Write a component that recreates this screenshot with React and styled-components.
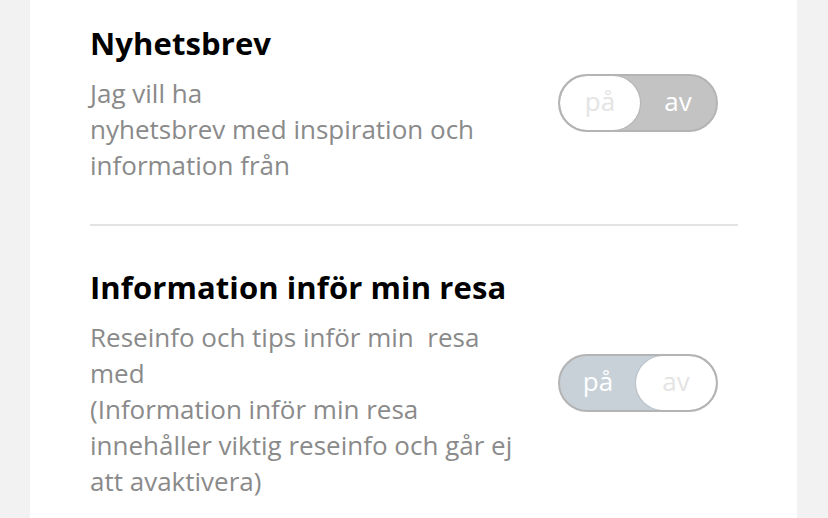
import React from "react";
import styled, { createGlobalStyle } from "styled-components";

const GlobalStyle = createGlobalStyle`
  html, body { margin: 0; padding: 0; background: #f2f2f2; }
  body { font-family: "Open Sans", "Noto Sans", sans-serif; }
`;

const Page = styled.div`
  display: flex;
  min-height: 518px;
  padding-left: 30px;
  width: 828px;
  box-sizing: border-box;
`;

const Card = styled.main`
  width: 767px;
  background: #ffffff;
  padding: 0 59px 0 60px;
  box-sizing: border-box;
  min-height: 518px;
`;

const Section = styled.section`
  display: flex;
  align-items: center;
  justify-content: space-between;
  padding: ${(p) => p.$pad};
  border-bottom: ${(p) => (p.$divider ? "2px solid #e3e3e3" : "none")};
`;

const TextBlock = styled.div`
  display: flex;
  flex-direction: column;
  gap: 12px;
`;

const Title = styled.h2`
  margin: 0;
  font-size: 31px;
  line-height: 40px;
  font-weight: 700;
  color: #000;
  letter-spacing: 0.1px;
  white-space: nowrap;
`;

const Desc = styled.p`
  margin: 0;
  font-size: 26px;
  line-height: 36px;
  font-weight: 400;
  color: #8a8a8a;
  white-space: pre;
`;

const Track = styled.div`
  display: flex;
  width: 160px;
  height: 58px;
  margin-right: 20px;
  box-sizing: border-box;
  border: 2px solid #b4b4b4;
  border-radius: 29px;
  background: ${(p) => p.$color};
  overflow: hidden;
  flex-shrink: 0;
`;

const Segment = styled.div`
  flex: ${(p) => (p.$knob ? "0 0 80px" : "1")};
  display: flex;
  align-items: center;
  justify-content: center;
  border-radius: 27px;
  background: ${(p) => (p.$knob ? "#ffffff" : "transparent")};
  box-shadow: ${(p) => (p.$knob ? "0 0 1px 1px rgba(0,0,0,0.08)" : "none")};
  color: ${(p) => (p.$knob ? "#e4e4e4" : "#ffffff")};
  font-size: 26px;
  line-height: 1;
  padding-bottom: 4px;
  box-sizing: border-box;
`;

function Toggle({ on, color }) {
  return (
    <Track $color={color}>
      <Segment $knob={!on}>på</Segment>
      <Segment $knob={on}>av</Segment>
    </Track>
  );
}

export default function App() {
  return (
    <>
      <GlobalStyle />
      <Page>
        <Card>
          <Section $pad="23px 0 41px" $divider>
            <TextBlock>
              <Title>Nyhetsbrev</Title>
              <Desc>{"Jag vill ha\nnyhetsbrev med inspiration och\ninformation från"}</Desc>
            </TextBlock>
            <Toggle on={false} color="#c3c3c3" />
          </Section>
          <Section $pad="41px 0 0">
            <TextBlock>
              <Title>Information inför min resa</Title>
              <Desc>
                {"Reseinfo och tips inför min  resa\nmed\n(Information inför min resa\ninnehåller viktig reseinfo och går ej\natt avaktivera)"}
              </Desc>
            </TextBlock>
            <Toggle on={true} color="#c8d0d8" />
          </Section>
        </Card>
      </Page>
    </>
  );
}
